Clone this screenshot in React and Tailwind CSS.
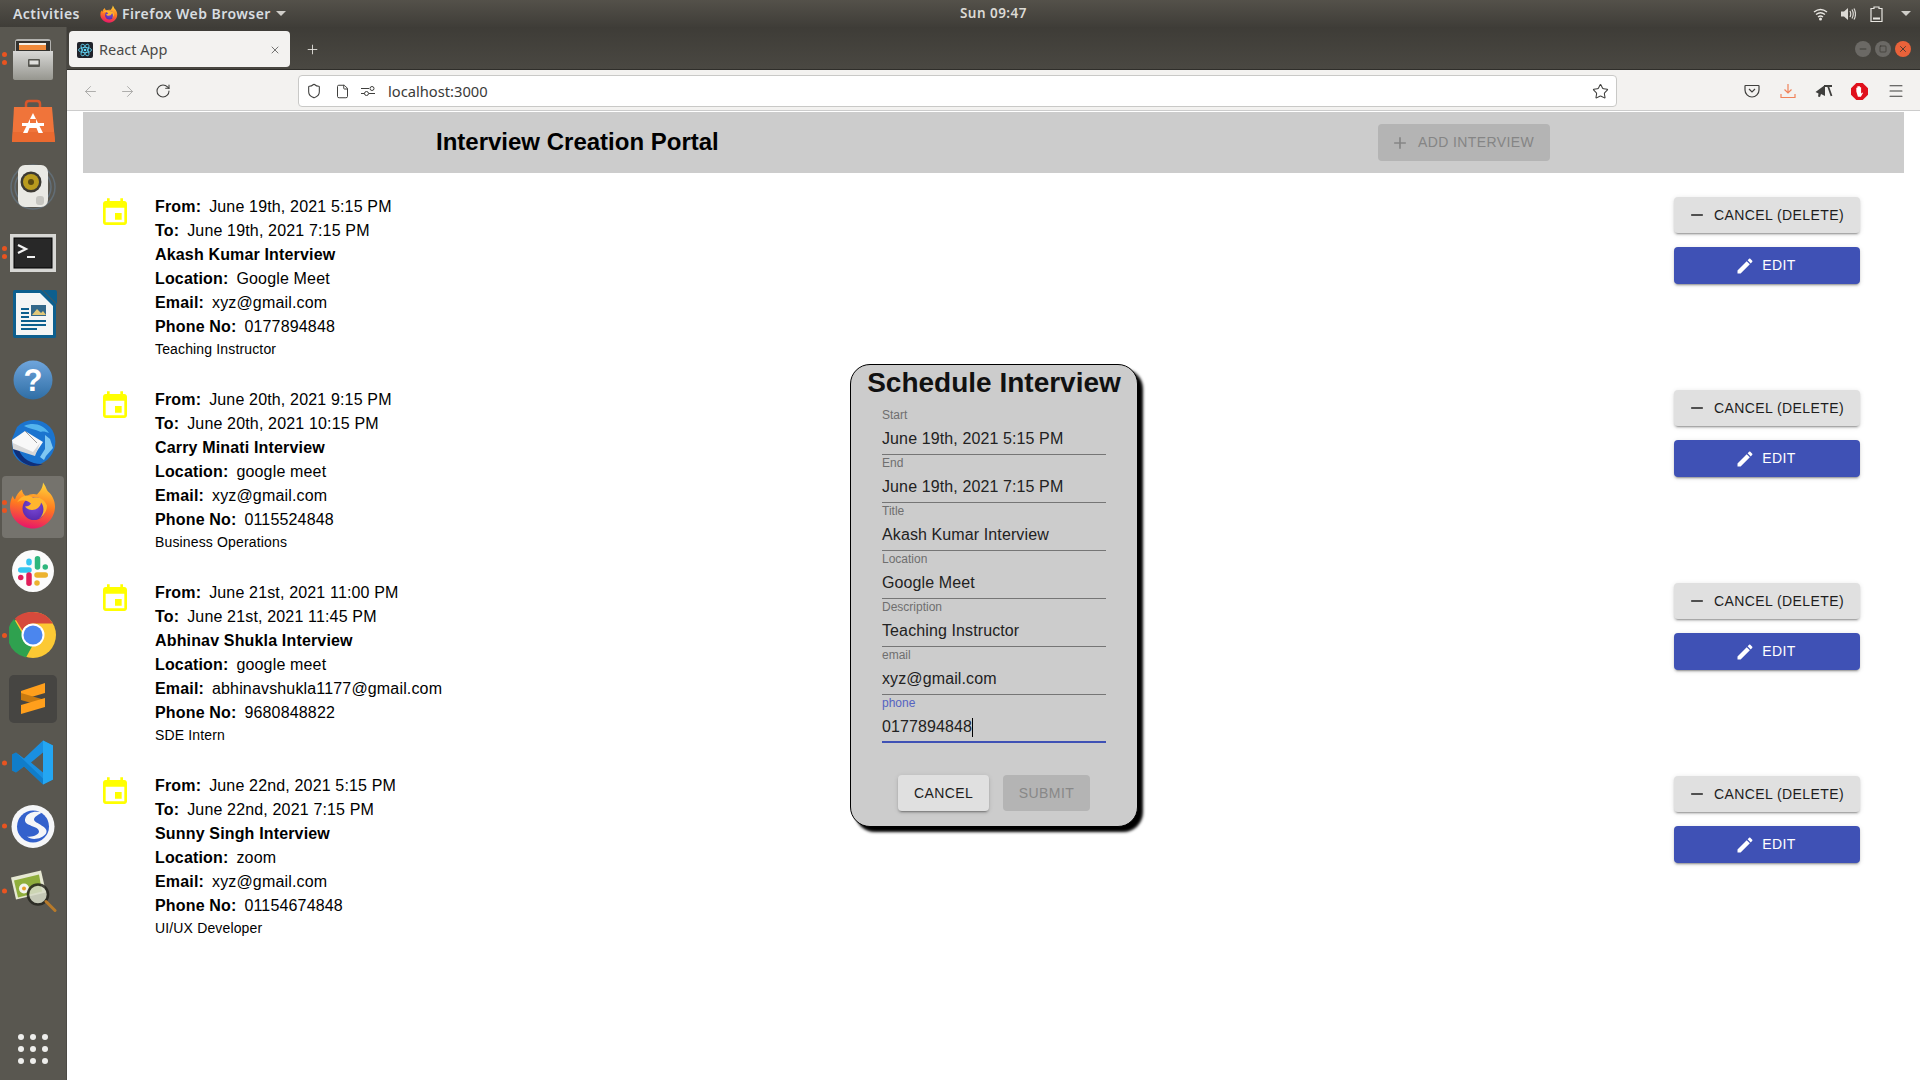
import React from "react";
import { ArrowLeft, ArrowRight, RotateCw, Shield, File, Star, Menu, X, Plus, Minus, Square } from "lucide-react";

const interviews = [
  { from: "June 19th, 2021 5:15 PM", to: "June 19th, 2021 7:15 PM", title: "Akash Kumar Interview", location: "Google Meet", email: "xyz@gmail.com", phone: "0177894848", desc: "Teaching Instructor" },
  { from: "June 20th, 2021 9:15 PM", to: "June 20th, 2021 10:15 PM", title: "Carry Minati Interview", location: "google meet", email: "xyz@gmail.com", phone: "0115524848", desc: "Business Operations" },
  { from: "June 21st, 2021 11:00 PM", to: "June 21st, 2021 11:45 PM", title: "Abhinav Shukla Interview", location: "google meet", email: "abhinavshukla1177@gmail.com", phone: "9680848822", desc: "SDE Intern" },
  { from: "June 22nd, 2021 5:15 PM", to: "June 22nd, 2021 7:15 PM", title: "Sunny Singh Interview", location: "zoom", email: "xyz@gmail.com", phone: "01154674848", desc: "UI/UX Developer" },
];

const fields = [
  ["Start", "June 19th, 2021 5:15 PM"],
  ["End", "June 19th, 2021 7:15 PM"],
  ["Title", "Akash Kumar Interview"],
  ["Location", "Google Meet"],
  ["Description", "Teaching Instructor"],
  ["email", "xyz@gmail.com"],
];

const shadow = "shadow-[0_3px_1px_-2px_rgba(0,0,0,0.2),0_2px_2px_0_rgba(0,0,0,0.14),0_1px_5px_0_rgba(0,0,0,0.12)]";

function FirefoxIcon({ size = 48 }) {
  return (
    <svg width={size} height={size} viewBox="0 0 48 48">
      <defs>
        <linearGradient id="ffa" x1="0.6" y1="0" x2="0.4" y2="1">
          <stop offset="0" stopColor="#ffd23a" />
          <stop offset="0.5" stopColor="#ff7a1f" />
          <stop offset="1" stopColor="#e8146a" />
        </linearGradient>
        <radialGradient id="ffb" cx="0.5" cy="0.4" r="0.6">
          <stop offset="0" stopColor="#7a4bd8" />
          <stop offset="1" stopColor="#5a2bb0" />
        </radialGradient>
      </defs>
      <path d="M34 1c3 4 3 6 5 9 4 3 7 9 7 15 0 12-10 22-22 22S1 37 1 25c0-4 1-8 3-11 0 2 1 3 2 4 1-4 4-8 7-10 0 3 2 5 4 7 4-3 8-3 11-2 3-3 6-7 6-12z" fill="url(#ffa)" />
      <circle cx="25" cy="27" r="11.5" fill="url(#ffb)" />
      <path d="M8 21c4-3 9-3 14 1-1 2-3 3-6 3 2 3 6 4 10 3 3-1 6-4 6-7 4 5 3 12-2 16 4-2 8-7 8-13-3-7-9-9-14-8-6-4-12-2-16 5z" fill="#ffb52e" />
    </svg>
  );
}

function ReactFavicon() {
  return (
    <svg width="16" height="16" viewBox="0 0 16 16" className="shrink-0">
      <rect width="16" height="16" rx="2" fill="#20232a" />
      <g fill="none" stroke="#61dafb" strokeWidth="0.8">
        <ellipse cx="8" cy="8" rx="6.5" ry="2.6" />
        <ellipse cx="8" cy="8" rx="6.5" ry="2.6" transform="rotate(60 8 8)" />
        <ellipse cx="8" cy="8" rx="6.5" ry="2.6" transform="rotate(120 8 8)" />
      </g>
      <circle cx="8" cy="8" r="1.3" fill="#61dafb" />
    </svg>
  );
}

const dockIcons = [
  { dots: 2, shift: "-translate-y-[3px]", el: (
    <svg width="48" height="48" viewBox="0 0 48 48">
      <defs><linearGradient id="fc" x1="0" y1="0" x2="0" y2="1"><stop offset="0" stopColor="#d8d8d6" /><stop offset="1" stopColor="#96968f" /></linearGradient></defs>
      <path d="M6 7q0-3 3-3h30q3 0 3 3v18H6z" fill="#b3b3b0" />
      <rect x="7" y="6" width="34" height="14" fill="#33322f" />
      <rect x="10" y="8" width="27" height="3" fill="#f3f0e8" />
      <rect x="10" y="10" width="27" height="5" fill="#f08a3a" />
      <path d="M4 16h40v27q0 2-2 2H7q-3 0-3-2z" fill="url(#fc)" />
      <rect x="19" y="24" width="12" height="8" rx="1" fill="#55554f" />
      <rect x="20.5" y="25.5" width="9" height="4" fill="#dfdfdc" />
    </svg>) },
  { dots: 0, shift: "-translate-y-[3px]", el: (
    <svg width="48" height="48" viewBox="0 0 48 48">
      <path d="M17 11V6q0-3 3-3h8q3 0 3 3v5" fill="none" stroke="#d9562a" strokeWidth="2.5" />
      <path d="M5 9h38l3 35H3z" fill="#f0743a" />
      <path d="M4 34h41l1 10H3z" fill="#ea6a30" />
      <path d="M24 15l-10 20h4.500l2-5h7l2 5H34z" fill="#fff" />
      <rect x="13" y="25" width="22" height="3" fill="#fff" />
      <rect x="21" y="21" width="6" height="4" fill="#f0743a" />
    </svg>) },
  { dots: 0, shift: "-translate-y-[2px]", el: (
    <svg width="48" height="48" viewBox="0 0 48 48">
      <circle cx="24" cy="24" r="22" fill="none" stroke="#6d8aa5" strokeWidth="1.5" opacity="0.45" />
      <circle cx="24" cy="24" r="18" fill="none" stroke="#6d8aa5" strokeWidth="1.5" opacity="0.5" />
      <rect x="9" y="2" width="30" height="42" rx="7" fill="#e9e9e4" />
      <circle cx="22" cy="19" r="10.5" fill="#3c3a33" />
      <circle cx="22" cy="19" r="8" fill="#b99b1e" />
      <circle cx="22" cy="19" r="3" fill="#5a4a12" />
      <rect x="27" y="33" width="8" height="9" rx="3" fill="#c6c6c1" />
    </svg>) },
  { dots: 2, shift: "", el: (
    <svg width="48" height="48" viewBox="0 0 48 48">
      <rect x="1" y="5" width="46" height="38" fill="#d7d7d4" />
      <rect x="5" y="9" width="38" height="30" fill="#282828" stroke="#000" />
      <path d="M9 16l8 4-8 4" fill="none" stroke="#f2f2f2" strokeWidth="2.2" />
      <rect x="18" y="27" width="8" height="2" fill="#f2f2f2" />
    </svg>) },
  { dots: 0, shift: "-translate-y-[2px]", el: (
    <svg width="48" height="48" viewBox="0 0 48 48">
      <path d="M6 0h26l2 1 13 13 0 33-1 1H6q-2 0-2-2V2q0-2 2-2z" fill="#0d5f8e" />
      <path d="M7 3h24l13 13v29H7z" fill="#f4f5f5" />
      <path d="M34 0h12q2 0 2 2v12z" fill="#0d5f8e" />
      <g fill="#0d5f8e">
        <rect x="12" y="18" width="8" height="2" /><rect x="12" y="22" width="8" height="2" /><rect x="12" y="26" width="8" height="2" />
        <rect x="12" y="30" width="25" height="2" /><rect x="12" y="34" width="25" height="2" /><rect x="12" y="38" width="16" height="2" />
      </g>
      <rect x="22" y="15" width="15" height="11" fill="#33688a" />
      <path d="M23 25l5-6 4 4 2-2 3 4z" fill="#e2c878" />
    </svg>) },
  { dots: 0, shift: "", el: (
    <svg width="48" height="48" viewBox="0 0 48 48">
      <defs><linearGradient id="hp" x1="0" y1="0" x2="0" y2="1"><stop offset="0" stopColor="#6fa5dc" /><stop offset="1" stopColor="#2f6ea5" /></linearGradient></defs>
      <circle cx="24" cy="24" r="19.5" fill="url(#hp)" />
      <text x="24" y="35" textAnchor="middle" fontFamily="'Liberation Sans', sans-serif" fontWeight="700" fontSize="31" fill="#fff">?</text>
    </svg>) },
  { dots: 0, shift: "", el: (
    <svg width="48" height="48" viewBox="0 0 48 48">
      <path d="M8 8a23 23 0 0 1 33 0c8 9 7 24-3 33-4 3-8 5-13 6-9 0-17-5-21-13L3 20z" fill="#1b74cf" />
      <path d="M4 30c3 9 11 17 21 17 3 0 6-1 9-2-10 1-21-5-24-14z" fill="#0f2f7a" />
      <path d="M15 7c9-4 19-2 25 7-3-1-6-2-8-1-6-3-12-3-17-6z" fill="#54b4ee" />
      <path d="M36 16l5 4 3 9-7 8-2 4-4-3 5-8z" fill="#7fc7f2" />
      <path d="M3 21l13-9 18 11-8 12-22-6z" fill="#f8f8f8" />
      <path d="M4 24l20 9 7-9-5 13-22-7z" fill="#d8d8d8" />
      <path d="M16 12l12 12" stroke="#9b9b9b" fill="none" />
    </svg>) },
  { dots: 2, active: true, shift: "", iconShift: "-translate-y-[1.500px]", el: <FirefoxIcon /> },
  { dots: 0, shift: "", el: (
    <svg width="48" height="48" viewBox="0 0 48 48">
      <circle cx="24" cy="24" r="21" fill="#fbfbfb" />
      <g transform="translate(9 9) scale(1.25)" >
        <rect x="0" y="9" width="11" height="4.4" rx="2.2" fill="#36c5f0" />
        <rect x="6.6" y="2" width="4.4" height="5.5" rx="2.2" fill="#36c5f0" />
        <rect x="13.4" y="0" width="4.4" height="11" rx="2.2" fill="#2eb67d" />
        <rect x="19.6" y="6.6" width="4.4" height="4.4" rx="2.2" fill="#2eb67d" />
        <rect x="13" y="13" width="11" height="4.4" rx="2.2" fill="#ecb22e" />
        <rect x="13" y="19.4" width="4.4" height="4.4" rx="2.2" fill="#ecb22e" />
        <rect x="6.6" y="13" width="4.4" height="11" rx="2.2" fill="#e01e5a" />
        <rect x="0" y="15" width="4.4" height="4.4" rx="2.2" fill="#e01e5a" />
      </g>
    </svg>) },
  { dots: 1, shift: "translate-y-[1px]", el: (
    <svg width="48" height="48" viewBox="0 0 48 48">
      <circle cx="24" cy="24" r="23" fill="#fcc934" />
      <path d="M24 1a23 23 0 0 1 20 11.5H24a11.5 11.5 0 0 0-10.5 7L6 7.5A23 23 0 0 1 24 1z" fill="#d64a3c" />
      <path d="M5 8l10.5 18a11 11 0 0 0 8 8.5L17 46.5A23 23 0 0 1 5 8z" fill="#2fa14f" />
      <circle cx="24" cy="24" r="11.5" fill="#fff" />
      <circle cx="24" cy="24" r="9.5" fill="#4b86ee" />
    </svg>) },
  { dots: 0, shift: "translate-y-[1px]", el: (
    <svg width="48" height="48" viewBox="0 0 48 48">
      <rect width="48" height="48" rx="5" fill="#464542" />
      <path d="M36 8v10L12 25v-9z" fill="#ff9f1c" />
      <path d="M12 25l24 7v-7l-24-7z" fill="#c87a10" />
      <path d="M36 23v9l-24 7v-9z" fill="#ff9f1c" />
    </svg>) },
  { dots: 1, shift: "translate-y-[1.500px]", el: (
    <svg width="48" height="48" viewBox="0 0 48 48">
      <path d="M34 2l10 5v34l-10 5-19-18-8 6-4-2V16l4-2 8 6zM34 14L22 24l12 10z" fill="#1a8fe0" />
      <path d="M34 2l10 5v34l-10 5z" fill="#24a6f2" />
      <path d="M3 16l4-2 27 26v6L15 28l-8 6-4-2z" fill="#0a6fb8" opacity="0.55" />
    </svg>) },
  { dots: 1, shift: "translate-y-[1.500px]", el: (
    <svg width="48" height="48" viewBox="0 0 48 48">
      <circle cx="24" cy="24" r="21.5" fill="#f5f6f8" />
      <circle cx="24" cy="24" r="16" fill="#3361cc" />
      <path d="M33 10c-7-2-16 0-17 7-1 7 14 6 14 12 0 3-6 6-12 5 4 4 15 3 19-3 4-7-12-10-12-14 0-3 5-5 8-7z" fill="#f5f6f8" />
    </svg>) },
  { dots: 1, shift: "translate-y-[2.500px]", el: (
    <svg width="48" height="48" viewBox="0 0 48 48">
      <path d="M2 10L32 3l5 22-30 7z" fill="#e6e8d2" />
      <path d="M5 13l25-6 3 17-24 6z" fill="#8fae3c" />
      <circle cx="15" cy="21" r="5" fill="#f4f4ee" />
      <circle cx="15" cy="21" r="2" fill="#e8a02a" />
      <circle cx="29" cy="27" r="10" fill="#d7dcc8" opacity="0.85" stroke="#26261f" strokeWidth="2.6" />
      <path d="M37 34l9 9" stroke="#b87a2a" strokeWidth="3" strokeLinecap="round" />
    </svg>) },
];

function Dock() {
  return (
    <div className="w-[67px] shrink-0 bg-[#595750] border-r border-[#4c4a45] flex flex-col pt-[3px] h-[1053px]">
      {dockIcons.map((d, i) => (
        <div key={i} className="relative h-[63.6px] flex items-center justify-center shrink-0">
          {d.active && <div className="absolute left-[2px] top-[0.5px] w-[62px] h-[62px] rounded-[4px] bg-[#75736d]" />}
          {d.dots > 0 && (
            <div className={`absolute left-[2px] top-0 bottom-0 flex flex-col justify-center gap-[3px] ${d.shift}`}>
              {Array.from({ length: d.dots }).map((_, k) => (
                <div key={k} className="w-[5px] h-[5px] rounded-full bg-[#e95420]" />
              ))}
            </div>
          )}
          <div className={`relative flex ${d.shift} ${d.iconShift || ""}`}>{d.el}</div>
        </div>
      ))}
      <div className="mt-auto mb-[16px] grid grid-cols-3 gap-x-[6px] gap-y-[6px] w-[30px] ml-[18px]">
        {Array.from({ length: 9 }).map((_, i) => (
          <div key={i} className="w-[6px] h-[6px] rounded-full bg-[#eeeeec]" />
        ))}
      </div>
    </div>
  );
}

function TopBar() {
  return (
    <div className="h-[27px] shrink-0 bg-gradient-to-b from-[#54514a] to-[#3f3d38] flex items-center text-[#e8e6e1] text-[14px] font-semibold font-['Noto_Sans',sans-serif] tracking-[0.45px]">
      <div className="w-[960px] flex items-center shrink-0">
        <span className="ml-[13px] text-[#d8dde0]">Activities</span>
        <span className="ml-[20px] flex"><FirefoxIcon size={18} /></span>
        <span className="ml-[4px] text-[#d8dde0]">Firefox Web Browser</span>
        <svg width="10" height="5" viewBox="0 0 10 5" className="ml-[5px]"><path d="M0 0h10L5 5z" fill="#d0cec9" /></svg>
      </div>
      <span className="text-[13.5px] text-[#dcdad5]">Sun 09:47</span>
      <div className="ml-auto flex items-center gap-[12px] mr-[9px]">
        <svg width="15" height="14" viewBox="0 0 15 14"><g fill="none" stroke="#e8e6e1" strokeWidth="1.4"><path d="M1 5q6.500-5 13 0" /><path d="M3 7.500q4.500-3.500 9 0" /><path d="M5 10q2.500-2 5 0" /></g><circle cx="7.500" cy="12" r="1.500" fill="#e8e6e1" /></svg>
        <svg width="16" height="14" viewBox="0 0 16 14"><path d="M1 4.500h3L8 1v12L4 9.500H1z" fill="#dcdad5" /><path d="M10 4q1.500 3 0 6M12 2.500q2.500 4.500 0 9M14 1.500q3 5.500 0 11" fill="none" stroke="#dcdad5" strokeWidth="1.2" /></svg>
        <svg width="13" height="16" viewBox="0 0 13 16" className="ml-[2px]"><path d="M4 1h5v1.500h3v13H1v-13h3z" fill="none" stroke="#e8e6e1" strokeWidth="1.2" /><rect x="3" y="11.500" width="7" height="2" fill="#e8e6e1" /></svg>
        <svg width="10" height="5" viewBox="0 0 10 5" className="ml-[6px]"><path d="M0 0h10L5 5z" fill="#d0cec9" /></svg>
      </div>
    </div>
  );
}

function TabBar() {
  return (
    <div className="h-[43px] shrink-0 bg-gradient-to-b from-[#3e3c37] to-[#4a4842] border-b border-[#2f2e2a] flex items-start pl-[2px] font-['Noto_Sans',sans-serif]">
      <div className="mt-[4px] w-[221px] h-[36px] bg-[#f3f2f0] rounded-[4px] flex items-center pl-[8px] pr-[9px] gap-[6px] pt-[1px]">
        <ReactFavicon />
        <span className="text-[14.5px] text-[#4a4a48] flex-1">React App</span>
        <X size={12} strokeWidth={1.5} className="text-[#4a4a48]" />
      </div>
      <Plus size={15} strokeWidth={1.4} className="text-[#e8e6e1] ml-[15px] mt-[15px]" />
      <div className="ml-auto mr-[9px] mt-[14px] flex gap-[4px]">
        <div className="w-[16px] h-[16px] rounded-full bg-[#6b6965] flex items-center justify-center"><Minus size={10} className="text-[#36352f]" /></div>
        <div className="w-[16px] h-[16px] rounded-full bg-[#6b6965] flex items-center justify-center"><Square size={8} className="text-[#36352f]" /></div>
        <div className="w-[16px] h-[16px] rounded-full bg-[#e9623a] flex items-center justify-center"><X size={10} className="text-[#36352f]" /></div>
      </div>
    </div>
  );
}

function Toolbar() {
  const c = "#3f3f3d";
  return (
    <div className="h-[41px] shrink-0 bg-[#f3f2f0] flex items-center border-b border-[#cccccc] pt-[2px] font-['Noto_Sans',sans-serif]">
      <ArrowLeft size={17} strokeWidth={1.3} className="ml-[15px] text-[#a8a8a6]" />
      <ArrowRight size={17} strokeWidth={1.3} className="ml-[20px] text-[#a8a8a6]" />
      <RotateCw size={16} strokeWidth={1.6} className="ml-[19px] text-[#3f3f3d]" />
      <div className="ml-[127px] w-[1319px] h-[32px] bg-white border border-[#c9c9c7] rounded-[4px] flex items-center pl-[7px] pr-[7px]">
        <Shield size={16} strokeWidth={1.6} className="text-[#3f3f3d]" />
        <File size={15} strokeWidth={1.6} className="ml-[13px] text-[#3f3f3d]" />
        <svg width="14" height="14" viewBox="0 0 14 14" className="ml-[11px]"><g fill="none" stroke={c} strokeWidth="1"><path d="M0 4.500h8M0 9.500h3.500M8 9.500h6" /><circle cx="11" cy="4.500" r="2" /><circle cx="5.500" cy="9.500" r="2" /></g></svg>
        <span className="ml-[13px] text-[14.7px] text-[#3a3a38]">localhost:3000</span>
        <Star size={17} strokeWidth={1.5} className="ml-auto text-[#3f3f3d]" />
      </div>
      <svg width="16" height="14" viewBox="0 0 16 14" className="ml-[127px]"><path d="M1.500 1.500h13q.5 0 .5.500v4a7 7 0 0 1-14 0V2q0-.5.5-.5z" fill="none" stroke={c} strokeWidth="1.2" /><path d="M5 5l3 3 3-3" fill="none" stroke={c} strokeWidth="1.2" /></svg>
      <svg width="16" height="16" viewBox="0 0 16 16" className="ml-[20px]"><path d="M8 1v9M4.500 6.500L8 10l3.500-3.500M1 11v3.500h14V11" fill="none" stroke="#f0835a" strokeWidth="1.2" /></svg>
      <svg width="18" height="14" viewBox="0 0 18 14" className="ml-[19px]"><path d="M0.500 8L10 1v11L6 10l-1 3-2-.5.500-3z" fill="#3f3f3d" /><path d="M9 2h8M13 2l3.500 10" fill="none" stroke="#3f3f3d" strokeWidth="1.8" /></svg>
      <svg width="17" height="17" viewBox="0 0 16 16" className="ml-[18px]"><path d="M5 0h6l5 5v6l-5 5H5l-5-5V5z" fill="#e0101c" /><path d="M5 8V4.500h1V7.500V3h1.200v4.500V3h1.200v4.500V4h1.100v6l1-1 .8.500-2 3.500H6.500z" fill="#fff" /></svg>
      <Menu size={18} strokeWidth={1.4} className="ml-[19px] text-[#3f3f3d]" />
    </div>
  );
}

function Row({ it }) {
  const L = ({ k, v }) => (
    <div className="h-[24px] leading-[24px]"><span className="font-bold">{k}</span><span className="ml-[8px]">{v}</span></div>
  );
  return (
    <div className="h-[193px] shrink-0 flex items-start pt-[15px] pl-[32px] pr-[60px]">
      <svg width="32" height="32" viewBox="0 0 24 24" className="mt-[2px] shrink-0" fill="#ffff00">
        <path d="M17 12h-5v5h5v-5zM16 1v2H8V1H6v2H5c-1.110 0-1.990.9-1.990 2L3 19c0 1.100.89 2 2 2h14c1.100 0 2-.9 2-2V5c0-1.100-.9-2-2-2h-1V1h-2zm3 18H5V8h14v11z" />
      </svg>
      <div className="ml-[24px] text-[16px] tracking-[0.16px] text-black flex-1">
        <L k="From:" v={it.from} />
        <L k="To:" v={it.to} />
        <div className="h-[24px] leading-[24px] font-bold">{it.title}</div>
        <L k="Location:" v={it.location} />
        <L k="Email:" v={it.email} />
        <L k="Phone No:" v={it.phone} />
        <div className="text-[14px] leading-[20px] tracking-[0.15px]">{it.desc}</div>
      </div>
      <div className="mt-[2px] w-[186px] flex flex-col gap-[14px] text-[14px] tracking-[0.4px]">
        <div className={`h-[36px] rounded-[4px] bg-[#e0e0e0] text-[#1d1d1d] flex items-center justify-center gap-[7px] pr-[3px] ${shadow}`}>
          <svg width="20" height="20" viewBox="0 0 24 24" fill="#333"><path d="M19 13H5v-2h14v2z" /></svg>
          <span>CANCEL (DELETE)</span>
        </div>
        <div className={`h-[37px] rounded-[4px] bg-[#3f51b5] text-white flex items-center justify-center gap-[7px] pr-[3px] ${shadow}`}>
          <svg width="20" height="20" viewBox="0 0 24 24" fill="#fff"><path d="M3 17.250V21h3.750L17.810 9.940l-3.750-3.750L3 17.250zM20.710 7.040c.39-.39.39-1.020 0-1.410l-2.340-2.340c-.39-.39-1.020-.39-1.410 0l-1.830 1.830 3.750 3.750 1.830-1.830z" /></svg>
          <span>EDIT</span>
        </div>
      </div>
    </div>
  );
}

function Modal() {
  return (
    <div className="absolute left-[850px] top-[364px] w-[288px] h-[463px] bg-[#cccccc] border border-black rounded-[20px] shadow-[5px_5px_3px_rgba(0,0,0,1)] px-[31px]">
      <div className="h-[42px] -mx-[31px] pt-[1px] text-center text-[28px] leading-[34px] font-bold text-[#111111]">Schedule Interview</div>
      {fields.map(([l, v]) => (
        <div key={l} className="h-[48px] border-b border-[#757575] pt-[1px]">
          <div className="h-[14px] text-[12px] leading-[14px] text-[#6f6f6f]">{l}</div>
          <div className="mt-[5px] text-[16px] leading-[24px] tracking-[0.11px] text-[#222222]">{v}</div>
        </div>
      ))}
      <div className="h-[48px] border-b-2 border-[#3f51b5] pt-[1px]">
        <div className="h-[14px] text-[12px] leading-[14px] text-[#5563c1]">phone</div>
        <div className="mt-[5px] text-[16px] leading-[24px] tracking-[0.11px] text-[#222222] flex items-center">0177894848<span className="w-[1px] h-[19px] bg-black" /></div>
      </div>
      <div className="mt-[32px] flex justify-center gap-[14px] text-[14px] tracking-[0.4px]">
        <div className={`w-[91px] h-[36px] rounded-[4px] bg-[#e0e0e0] text-[#1d1d1d] flex items-center justify-center ${shadow}`}>CANCEL</div>
        <div className="w-[87px] h-[36px] rounded-[4px] bg-[#b4b4b4] text-[#888888] flex items-center justify-center">SUBMIT</div>
      </div>
    </div>
  );
}

export default function App() {
  return (
    <div className="relative w-[1920px] h-[1080px] overflow-hidden bg-white flex flex-col font-['Liberation_Sans',Arial,sans-serif]">
      <TopBar />
      <div className="flex flex-1 min-h-0">
        <Dock />
        <div className="flex-1 min-w-0 flex flex-col">
          <TabBar />
          <Toolbar />
          <div className="flex-1 bg-white flex flex-col">
            <div className="mt-px ml-[16px] mr-[16px] h-[61px] shrink-0 bg-[#cccccc] flex items-center pl-[353px]">
              <div className="w-[942px] mb-[2px] text-[24px] font-bold text-black">Interview Creation Portal</div>
              <div className="w-[172px] h-[37px] rounded-[4px] bg-[#b4b4b4] text-[#858585] text-[14px] tracking-[0.4px] flex items-center justify-center gap-[8px] pr-[4px]">
                <svg width="20" height="20" viewBox="0 0 24 24" fill="#858585"><path d="M19 13h-6v6h-2v-6H5v-2h6V5h2v6h6v2z" /></svg>
                <span>ADD INTERVIEW</span>
              </div>
            </div>
            <div className="pt-[7px] flex flex-col">
              {interviews.map((it) => <Row key={it.title} it={it} />)}
            </div>
          </div>
        </div>
      </div>
      <Modal />
    </div>
  );
}
